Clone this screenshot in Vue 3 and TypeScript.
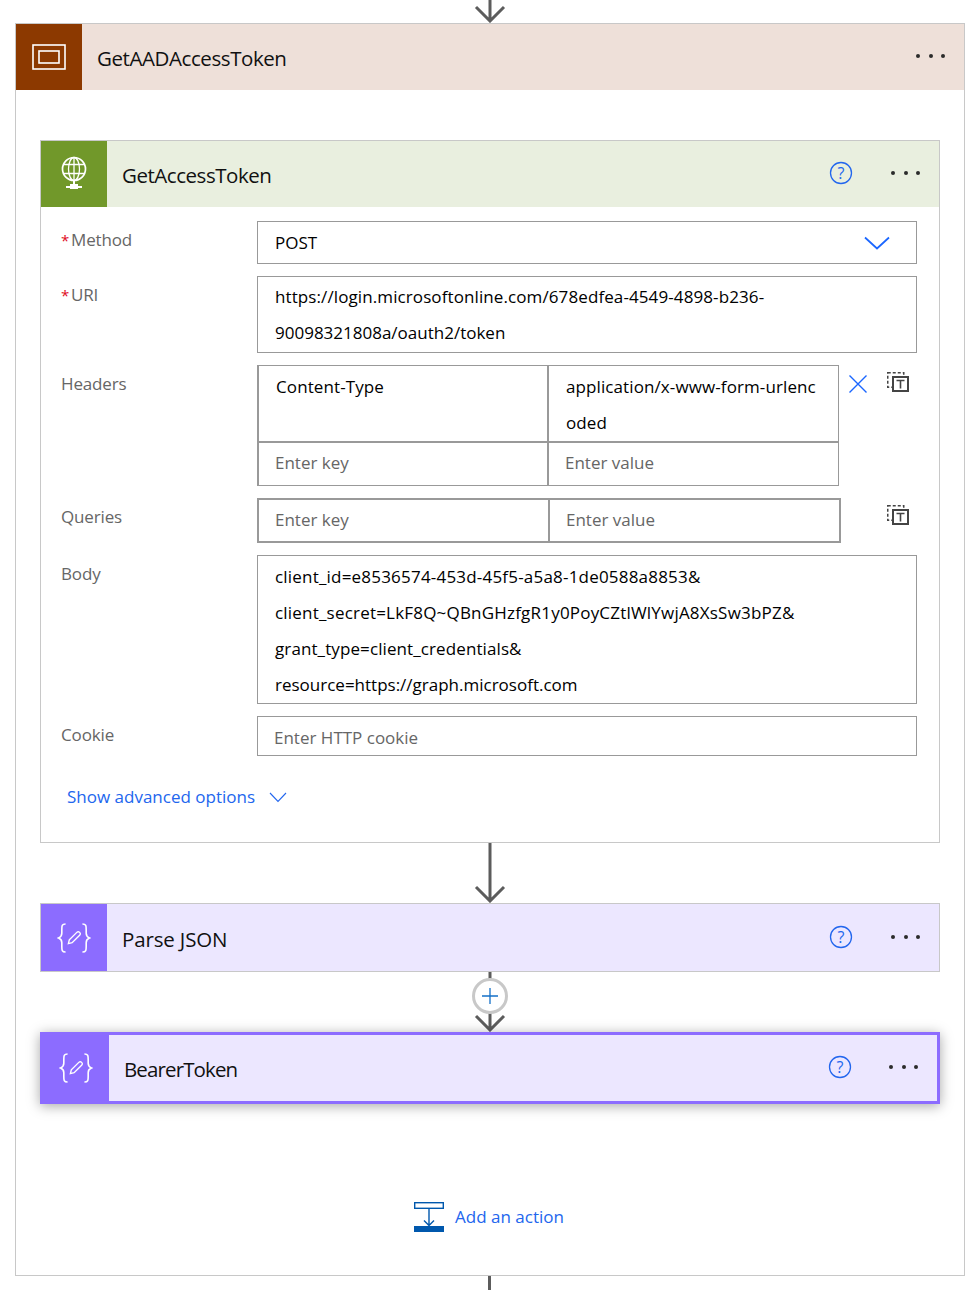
<template>
  <div class="page">
    <div class="line-top">
      <svg width="32" height="23" viewBox="0 0 32 23"><path d="M16 0V21M2 7L16 21L30 7" class="arrow" /></svg>
    </div>

    <div class="scope">
      <div class="head scope-head">
        <div class="icon icon-brown">
          <svg width="34" height="26" viewBox="0 0 34 26" fill="none" stroke="#fff" stroke-width="1.6">
            <rect x="1" y="1" width="32" height="24" />
            <rect x="7" y="7" width="20" height="12" />
          </svg>
        </div>
        <span class="title title-scope">GetAADAccessToken</span>
        <div class="dots"><i></i><i></i><i></i></div>
      </div>

      <div class="action">
        <div class="head http-head">
          <div class="icon icon-green">
            <svg width="28" height="36" viewBox="0 0 28 36" fill="none" stroke="#fff" stroke-width="1.3">
              <circle cx="14" cy="13" r="11.5" stroke-width="1.7" />
              <ellipse cx="14" cy="13" rx="5.5" ry="11.5" />
              <path d="M14 1.5V24.5M3.5 8.5H24.5M3.5 17.5H24.5" />
              <path d="M14 24.5V28M6 31H22" stroke-width="2" />
              <rect x="10" y="28" width="8" height="5" fill="#fff" stroke="none" />
            </svg>
          </div>
          <span class="title title-http">GetAccessToken</span>
          <svg class="help" width="24" height="24" viewBox="0 0 24 24">
            <circle cx="12" cy="12" r="10.5" fill="none" stroke="#2266ee" stroke-width="1.3" />
            <text x="12" y="17.5" text-anchor="middle" class="help-mark">?</text>
          </svg>
          <div class="dots"><i></i><i></i><i></i></div>
        </div>

        <div class="form">
          <div class="row">
            <label class="lbl"><em>*</em>Method</label>
            <div class="field select">
              <span>POST</span>
              <svg width="26" height="14" viewBox="0 0 26 14" fill="none" stroke="#1a66ff" stroke-width="1.7"><path d="M1 1.5L13 12.5L25 1.5" /></svg>
            </div>
          </div>
          <div class="row">
            <label class="lbl"><em>*</em>URI</label>
            <div class="field multi uri">
              <div>https://login.microsoftonline.com/678edfea-4549-4898-b236-</div>
              <div>90098321808a/oauth2/token</div>
            </div>
          </div>
          <div class="row">
            <label class="lbl">Headers</label>
            <div class="kv-wrap">
              <div class="kv-table">
                <div class="cell cell-tall">Content-Type</div>
                <div class="cell cell-tall">
                  <div>application/x-www-form-urlenc</div>
                  <div>oded</div>
                </div>
                <div class="cell ph">Enter key</div>
                <div class="cell ph">Enter value</div>
              </div>
              <svg class="close" width="20" height="20" viewBox="0 0 20 20" fill="none" stroke="#1a66ff" stroke-width="1.4"><path d="M1.5 1.5L18.5 18.5M18.5 1.5L1.5 18.5" /></svg>
              <svg class="switch" width="23" height="21" viewBox="0 0 23 21" fill="none">
                <rect x="1.75" y="1.75" width="16" height="14.5" stroke="#444" stroke-width="1.5" stroke-dasharray="3 2" />
                <rect x="7" y="6" width="15" height="14" stroke="#444" stroke-width="2" fill="#fff" />
                <path d="M10.5 9.5H18.5M14.5 9.5V17.5" stroke="#444" stroke-width="1.6" />
              </svg>
            </div>
          </div>
          <div class="row">
            <label class="lbl">Queries</label>
            <div class="kv-wrap">
              <div class="kv-table kv-query">
                <div class="cell ph">Enter key</div>
                <div class="cell ph">Enter value</div>
              </div>
              <svg class="switch switch-q" width="23" height="21" viewBox="0 0 23 21" fill="none">
                <rect x="1.75" y="1.75" width="16" height="14.5" stroke="#444" stroke-width="1.5" stroke-dasharray="3 2" />
                <rect x="7" y="6" width="15" height="14" stroke="#444" stroke-width="2" fill="#fff" />
                <path d="M10.5 9.5H18.5M14.5 9.5V17.5" stroke="#444" stroke-width="1.6" />
              </svg>
            </div>
          </div>
          <div class="row">
            <label class="lbl">Body</label>
            <div class="field multi body">
              <div>client_id=e8536574-453d-45f5-a5a8-1de0588a8853&amp;</div>
              <div>client_secret=LkF8Q~QBnGHzfgR1y0PoyCZtlWlYwjA8XsSw3bPZ&amp;</div>
              <div>grant_type=client_credentials&amp;</div>
              <div>resource=https://graph.microsoft.com</div>
            </div>
          </div>
          <div class="row">
            <label class="lbl">Cookie</label>
            <div class="field cookie ph">Enter HTTP cookie</div>
          </div>
        </div>

        <div class="advanced">
          <span>Show advanced options</span>
          <svg width="18" height="11" viewBox="0 0 18 11" fill="none" stroke="#2266ee" stroke-width="1.1"><path d="M1 1L9 9.5L17 1" /></svg>
        </div>
      </div>

      <div class="connector long">
        <svg width="32" height="60" viewBox="0 0 32 60"><path d="M16 0V58M2 44L16 58L30 44" class="arrow" /></svg>
      </div>

      <div class="card-plain head">
        <div class="icon icon-purple">
          <svg width="34" height="30" viewBox="0 0 36 32" fill="none" stroke="#fff" stroke-width="1.7">
            <path d="M9 1C5 1 5 3 5 7V11C5 14 4 15 1.5 16C4 17 5 18 5 21V25C5 29 5 31 9 31" />
            <path d="M27 1C31 1 31 3 31 7V11C31 14 32 15 34.5 16C32 17 31 18 31 21V25C31 29 31 31 27 31" />
            <path d="M12 22L13 18L21 10C22 9 23 9 24 10C25 11 25 12 24 13L16 21Z" stroke-width="1.5" />
          </svg>
        </div>
        <span class="title title-parse">Parse JSON</span>
        <svg class="help" width="24" height="24" viewBox="0 0 24 24">
          <circle cx="12" cy="12" r="10.5" fill="none" stroke="#2266ee" stroke-width="1.3" />
          <text x="12" y="17.5" text-anchor="middle" class="help-mark">?</text>
        </svg>
        <div class="dots"><i></i><i></i><i></i></div>
      </div>

      <div class="connector short">
        <svg width="32" height="60" viewBox="0 0 32 60"><path d="M16 0V58M2 44L16 58L30 44" class="arrow" /></svg>
        <div class="plus">
          <svg width="16" height="16" viewBox="0 0 16 16" fill="none" stroke="#1570c8" stroke-width="1.3"><path d="M8 0V16M0 8H16" /></svg>
        </div>
      </div>

      <div class="card-selected head">
        <div class="icon icon-purple">
          <svg width="34" height="30" viewBox="0 0 36 32" fill="none" stroke="#fff" stroke-width="1.7">
            <path d="M9 1C5 1 5 3 5 7V11C5 14 4 15 1.5 16C4 17 5 18 5 21V25C5 29 5 31 9 31" />
            <path d="M27 1C31 1 31 3 31 7V11C31 14 32 15 34.5 16C32 17 31 18 31 21V25C31 29 31 31 27 31" />
            <path d="M12 22L13 18L21 10C22 9 23 9 24 10C25 11 25 12 24 13L16 21Z" stroke-width="1.5" />
          </svg>
        </div>
        <span class="title title-bearer">BearerToken</span>
        <svg class="help" width="24" height="24" viewBox="0 0 24 24">
          <circle cx="12" cy="12" r="10.5" fill="none" stroke="#2266ee" stroke-width="1.3" />
          <text x="12" y="17.5" text-anchor="middle" class="help-mark">?</text>
        </svg>
        <div class="dots"><i></i><i></i><i></i></div>
      </div>

      <div class="add-action">
        <svg width="30" height="30" viewBox="0 0 30 30" fill="none" stroke="#0058ad" stroke-width="1.4">
          <rect x="0.7" y="0.7" width="28.6" height="5.6" />
          <path d="M15 6V23M10 18.5L15 23.5L20 18.5" />
          <rect x="0" y="24" width="30" height="6" fill="#0058ad" stroke="none" />
        </svg>
        <span>Add an action</span>
      </div>
    </div>

    <div class="line-bottom"></div>
  </div>
</template>

<script setup lang="ts">
</script>

<style>
html,
body {
  background: #fff;
}
</style>

<style scoped>
.page {
  width: 979px;
  height: 1290px;
  overflow: hidden;
  padding-left: 15px;
  box-sizing: border-box;
  font-family: "Open Sans", "Noto Sans", sans-serif;
  font-size: 17px;
  color: #000;
}

.line-top {
  width: 950px;
  height: 23px;
  display: flex;
  justify-content: center;
}

.arrow {
  fill: none;
  stroke: #5c5c5c;
  stroke-width: 3;
}

.scope {
  width: 950px;
  height: 1253px;
  box-sizing: border-box;
  border: 1px solid #c8c8c8;
  background: #fff;
}

.head {
  display: flex;
  align-items: center;
  height: 66px;
}

.scope-head {
  background: #eee0d9;
  margin-bottom: 50px;
}

.icon {
  width: 66px;
  height: 100%;
  flex: none;
  display: flex;
  align-items: center;
  justify-content: center;
}

.icon-brown {
  background: #8c3900;
}

.icon-green {
  background: #71982a;
}

.icon-purple {
  background: #8c6cff;
}

.title {
  margin-left: 15px;
  padding-top: 2px;
  flex: 1;
  font-size: 20.5px;
  color: #111;
}

.title-scope {
  letter-spacing: -0.42px;
}

.title-http {
  letter-spacing: -0.46px;
}

.title-parse {
  letter-spacing: -0.15px;
}

.title-bearer {
  letter-spacing: -0.88px;
}

.dots {
  display: flex;
  gap: 8.5px;
  width: 30px;
  margin: 0 18px 2px 0;
}

.dots i {
  width: 4px;
  height: 4px;
  border-radius: 50%;
  background: #2b2b2b;
}

.help {
  margin: 0 38px 2px 0;
  flex: none;
}

.help-mark {
  font-size: 16px;
  fill: #2266ee;
}

.action {
  margin: 0 24px;
  border: 1px solid #c8c8c8;
  height: 703px;
  box-sizing: border-box;
}

.http-head {
  background: #e9efdf;
}

.form {
  padding: 14px 22px 0 20px;
  display: flex;
  flex-direction: column;
  gap: 12px;
}

.row {
  display: flex;
  align-items: flex-start;
}

.lbl {
  width: 196px;
  flex: none;
  color: #666;
  line-height: 36px;
  margin-top: 1px;
  letter-spacing: -0.15px;
}

.lbl em {
  display: inline-block;
  width: 10px;
  color: #e00b1c;
  font-style: normal;
  font-size: 15px;
}

.field {
  flex: 1;
  box-sizing: border-box;
  border: 1px solid #999;
  padding: 0 17px;
  line-height: 36px;
}

.select {
  height: 43px;
  display: flex;
  align-items: center;
  justify-content: space-between;
  padding-right: 26px;
}

.multi {
  padding-bottom: 1px;
}

.multi.uri {
  padding-top: 2px;
  letter-spacing: 0.1px;
}

.uri div:nth-child(2) {
  letter-spacing: 0;
}

.multi.body {
  padding-top: 3px;
  padding-bottom: 0;
}

.body div:nth-child(1),
.body div:nth-child(2) {
  letter-spacing: 0.2px;
}

.body div:nth-child(3) {
  letter-spacing: 0.1px;
}

.cookie {
  height: 40px;
  padding-left: 16px;
  line-height: 42px;
}

.ph {
  color: #666;
}

.kv-wrap {
  flex: 1;
  height: 100%;
  display: flex;
  align-items: flex-start;
  position: relative;
}

.kv-table {
  width: 582px;
  display: grid;
  grid-template-columns: 288px 1fr;
  border: 1px solid #999;
  border-left-width: 2px;
  box-sizing: border-box;
}

.kv-query {
  width: 584px;
  border-width: 2px;
  grid-template-columns: 289px 1fr;
}

.cell {
  box-sizing: border-box;
  padding: 0 16px;
  line-height: 40px;
  height: 42px;
}

.kv-query .cell {
  height: 41px;
  line-height: 39px;
}

.cell:nth-child(even) {
  border-left: 2px solid #999;
}

.cell-tall {
  height: 77px;
  line-height: 36px;
  padding: 3px 17px 0;
  border-bottom: 2px solid #999;
  letter-spacing: 0.1px;
}

.close {
  margin: 9px 0 0 9px;
  flex: none;
}

.switch {
  flex: none;
  margin: 6px 0 0 18px;
}

.switch-q {
  margin-left: 45px;
}

.advanced {
  display: flex;
  align-items: center;
  gap: 14px;
  padding: 27px 0 0 26px;
  color: #2266ee;
  line-height: 28px;
}

.connector {
  display: flex;
  justify-content: center;
  height: 60px;
  position: relative;
}

.card-plain {
  margin: 0 24px;
  height: 69px;
  box-sizing: border-box;
  border: 1px solid #c8c8c8;
  background: #ece7ff;
}

.plus {
  position: absolute;
  left: 456px;
  top: 6px;
  width: 36px;
  height: 36px;
  box-sizing: border-box;
  border: 3px solid #c8c8c8;
  border-radius: 50%;
  background: #fff;
  display: flex;
  align-items: center;
  justify-content: center;
}

.card-selected {
  margin: 0 24px;
  height: 72px;
  box-sizing: border-box;
  border: 3px solid #8c6cff;
  border-left: 0;
  background: #ece7ff;
  box-shadow: 0 2px 12px rgba(0, 0, 0, 0.35);
  position: relative;
}

.card-selected .icon {
  width: 69px;
  padding-left: 3px;
  box-sizing: border-box;
}

.card-selected .help {
  margin-right: 37px;
}

.add-action {
  margin-top: 98px;
  padding-right: 2px;
  display: flex;
  align-items: center;
  justify-content: center;
  gap: 11px;
  color: #2266ee;
}

.add-action span {
  margin-bottom: 2px;
}

.line-bottom {
  width: 3px;
  height: 14px;
  margin-left: 473px;
  background: #5c5c5c;
}
</style>
